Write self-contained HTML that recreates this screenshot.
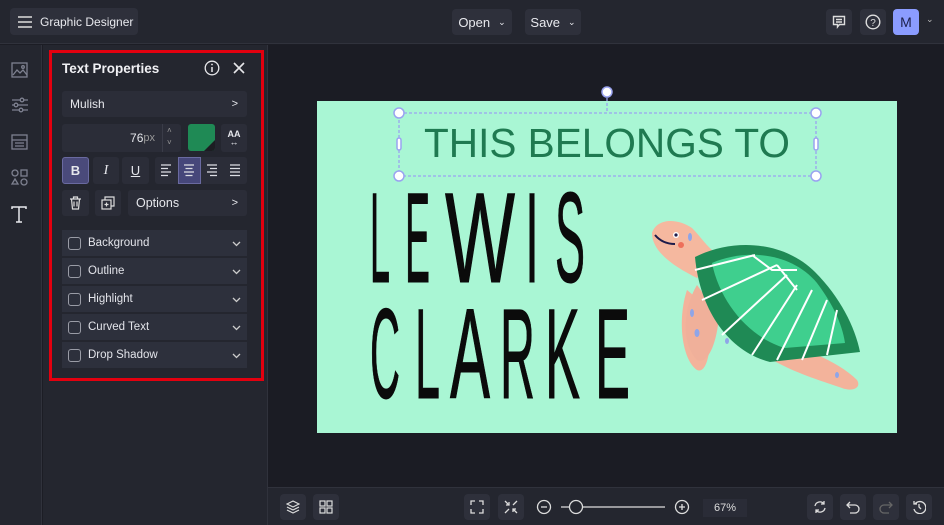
<!DOCTYPE html>
<html><head><meta charset="utf-8"><style>
*{box-sizing:border-box;margin:0;padding:0}
body{width:944px;height:525px;overflow:hidden;background:#1c1d25;font-family:"Liberation Sans",sans-serif;color:#e6e7ec;position:relative}
.abs{position:absolute}
.top{left:0;top:0;width:944px;height:44px;background:#24262f;border-bottom:1px solid #30323c}
.btn{position:absolute;background:#2e303b;border-radius:4px;font-size:13px;color:#e8e9ee;display:flex;align-items:center;justify-content:center;white-space:nowrap}
.rail{left:0;top:45px;width:42px;height:480px;background:#24262f;border-right:1px solid #30323c}
.panel{left:43px;top:45px;width:225px;height:480px;background:#24262f;border-right:1px solid #30323c}
.red{left:49px;top:50px;width:215px;height:331px;border:3px solid #e3000f}
.ctl{position:absolute;background:#2b2d38;border-radius:3px;font-size:12px;color:#e6e7ec;display:flex;align-items:center}
.acc{position:absolute;left:62px;width:185px;height:26px;background:#2d303c;font-size:11.5px;display:flex;align-items:center;color:#e3e4ea}
.acc .cb{width:13px;height:13px;border:1.5px solid #9a9ca6;border-radius:3px;margin:0 7px 0 6px}
.acc .ch{position:absolute;right:6px;top:9px}
.bottom{left:268px;top:487px;width:676px;height:38px;background:#24262f;border-top:1px solid #30323c}
.ib{position:absolute;width:26px;height:26px;background:#2e303b;border-radius:4px;display:flex;align-items:center;justify-content:center}
</style></head><body>
<div class="abs top"></div>
<div class="btn" style="left:10px;top:8px;width:128px;height:27px;justify-content:flex-start;padding-left:8px">
<svg width="14" height="12" viewBox="0 0 14 12"><path d="M0 1h14M0 6h14M0 11h14" stroke="#ddd" stroke-width="1.5"/></svg>
<span style="margin-left:8px;font-size:12px">Graphic Designer</span></div>
<div class="btn" style="left:452px;top:9px;width:60px;height:26px">Open <span style="font-size:9px;margin-left:8px">&#8964;</span></div>
<div class="btn" style="left:525px;top:9px;width:56px;height:26px">Save <span style="font-size:9px;margin-left:8px">&#8964;</span></div>
<div class="btn" style="left:826px;top:9px;width:26px;height:26px"><svg width="14" height="14" viewBox="0 0 14 14"><path d="M1.5 1.5h11v8h-5l-2 2.5v-2.5h-4z M4 4.5h6M4 7h6" fill="none" stroke="#ddd" stroke-width="1.4"/></svg></div>
<div class="btn" style="left:860px;top:9px;width:26px;height:26px"><svg width="16" height="16" viewBox="0 0 16 16"><circle cx="8" cy="8" r="6.8" fill="none" stroke="#ddd" stroke-width="1.4"/><text x="8" y="12" font-size="10" text-anchor="middle" fill="#ddd" font-family="Liberation Sans">?</text></svg></div>
<div class="btn" style="left:893px;top:9px;width:26px;height:26px;background:#8b9cff;color:#1c1f4a;font-size:14px">M</div>
<div class="abs" style="left:926px;top:14px;font-size:9px;color:#bbb">&#8964;</div>

<div class="abs rail"></div>
<svg class="abs" style="left:10px;top:61px" width="20" height="170" viewBox="0 0 20 170" fill="none" stroke="#7e8190" stroke-width="1.3">
<rect x="2" y="2" width="15" height="14"/><path d="M3 14l4-5 3 3 3-3 4 5"/><circle cx="13" cy="6" r="1.3"/>
<path d="M2 39h16M2 44h16M2 49h16"/><circle cx="12" cy="39" r="1.8" fill="#24262f"/><circle cx="6" cy="44" r="1.8" fill="#24262f"/><circle cx="11" cy="49" r="1.8" fill="#24262f"/>
<rect x="2" y="74" width="15" height="14"/><path d="M2 79h15M5 82h9M5 85h9"/>
<circle cx="5" cy="112" r="3"/><rect x="11" y="109" width="6" height="6"/><path d="M5 118l3 5h-6z"/><circle cx="14" cy="121" r="3"/>
<path d="M2 148v-2h14v2M9 146v15M6 161h6" stroke="#e8e9ee" stroke-width="1.5"/>
</svg>

<div class="abs panel"></div>
<div class="abs red"></div>
<div class="abs" style="left:62px;top:61px;font-size:13.5px;font-weight:bold;color:#f0f0f4">Text Properties</div>
<svg class="abs" style="left:204px;top:60px" width="44" height="16" viewBox="0 0 44 16"><circle cx="8" cy="8" r="6.8" fill="none" stroke="#e6e6ea" stroke-width="1.3"/><path d="M8 7v5" stroke="#e6e6ea" stroke-width="1.5"/><circle cx="8" cy="4.5" r="0.9" fill="#e6e6ea"/><path d="M30 3l10 10M40 3l-10 10" stroke="#e6e6ea" stroke-width="1.6"/></svg>
<div class="ctl" style="left:62px;top:91px;width:185px;height:26px;padding-left:8px">Mulish<span style="position:absolute;right:9px;font-size:11px">&gt;</span></div>
<div class="ctl" style="left:62px;top:124px;width:119px;height:28px;justify-content:flex-end;padding-right:26px">76<span style="color:#999;font-size:11px">px</span></div>
<div class="abs" style="left:162px;top:124px;width:1px;height:28px;background:#3a3c48"></div>
<div class="abs" style="left:167px;top:125px;font-size:8px;color:#999;line-height:12px">&#708;<br>&#709;</div>
<div class="abs" style="left:188px;top:124px;width:27px;height:27px;background:#1f8a55;border-radius:3px;overflow:hidden"><div style="position:absolute;right:0;bottom:0;border-left:11px solid transparent;border-bottom:11px solid #1c1d22"></div></div>
<div class="ctl" style="left:221px;top:124px;width:26px;height:28px;justify-content:center;font-size:9px;font-weight:bold;line-height:8px;text-align:center;flex-direction:column">AA<span style="font-size:9px">&#8596;</span></div>
<div class="ctl" style="left:62px;top:157px;width:27px;height:27px;justify-content:center;background:#4a4a7a;border:1px solid #6a6aa0;font-weight:bold;font-size:13px">B</div>
<div class="ctl" style="left:93px;top:157px;width:26px;height:27px;justify-content:center;font-style:italic;font-size:14px;font-family:'Liberation Serif',serif">I</div>
<div class="ctl" style="left:122px;top:157px;width:27px;height:27px;justify-content:center;text-decoration:underline;font-size:13px">U</div>
<div class="ctl" style="left:155px;top:157px;width:92px;height:27px"></div>
<div class="abs" style="left:178px;top:157px;width:23px;height:27px;background:#46477a;border:1px solid #6a6aa0"></div>
<svg class="abs" style="left:155px;top:157px" width="92" height="27" viewBox="0 0 92 27" stroke="#dcdde3" stroke-width="1.2">
<path d="M6 8h10M6 11.5h7M6 15h10M6 18.5h7"/><path d="M29 8h10M30.5 11.5h7M29 15h10M30.5 18.5h7"/><path d="M52 8h10M55 11.5h7M52 15h10M55 18.5h7"/><path d="M75 8h10M75 11.5h10M75 15h10M75 18.5h10"/></svg>
<div class="ctl" style="left:62px;top:190px;width:27px;height:26px;justify-content:center"><svg width="13" height="14" viewBox="0 0 13 14" fill="none" stroke="#ddd" stroke-width="1.2"><path d="M1 3h11M4.5 3V1h4v2M2.5 3l1 10h6l1-10M5 5.5v5M8 5.5v5"/></svg></div>
<div class="ctl" style="left:95px;top:190px;width:26px;height:26px;justify-content:center"><svg width="14" height="14" viewBox="0 0 14 14" fill="none" stroke="#ddd" stroke-width="1.2"><rect x="1" y="4" width="9" height="9"/><path d="M4 4V1h9v9h-3M5.5 6.5v4M3.5 8.5h4"/></svg></div>
<div class="ctl" style="left:128px;top:190px;width:119px;height:26px;padding-left:8px;font-size:12.5px">Options<span style="position:absolute;right:9px;font-size:11px">&gt;</span></div>
<div class="acc" style="top:230px"><div class="cb"></div>Background<svg class="ch" width="9" height="9" viewBox="0 0 9 9"><path d="M1 3l3.5 3.5L8 3" fill="none" stroke="#ccc" stroke-width="1.3"/></svg></div>
<div class="acc" style="top:258px"><div class="cb"></div>Outline<svg class="ch" width="9" height="9" viewBox="0 0 9 9"><path d="M1 3l3.5 3.5L8 3" fill="none" stroke="#ccc" stroke-width="1.3"/></svg></div>
<div class="acc" style="top:286px"><div class="cb"></div>Highlight<svg class="ch" width="9" height="9" viewBox="0 0 9 9"><path d="M1 3l3.5 3.5L8 3" fill="none" stroke="#ccc" stroke-width="1.3"/></svg></div>
<div class="acc" style="top:314px"><div class="cb"></div>Curved Text<svg class="ch" width="9" height="9" viewBox="0 0 9 9"><path d="M1 3l3.5 3.5L8 3" fill="none" stroke="#ccc" stroke-width="1.3"/></svg></div>
<div class="acc" style="top:342px"><div class="cb"></div>Drop Shadow<svg class="ch" width="9" height="9" viewBox="0 0 9 9"><path d="M1 3l3.5 3.5L8 3" fill="none" stroke="#ccc" stroke-width="1.3"/></svg></div>

<!-- canvas -->
<div class="abs" style="left:268px;top:45px;width:676px;height:442px;background:#1b1c24"></div>
<svg class="abs" style="left:317px;top:85px" width="580" height="348" viewBox="0 0 580 348">
<rect x="0" y="16" width="580" height="332" fill="#a9f6d4"/>
<text x="290" y="72" font-family="Liberation Sans" font-size="41" fill="#1f7a51" text-anchor="middle" textLength="366" lengthAdjust="spacingAndGlyphs">THIS BELONGS TO</text>
<g font-family="Liberation Sans" font-size="128" fill="#0b0b0b" stroke="#0b0b0b" stroke-width="1" lengthAdjust="spacingAndGlyphs">
<text x="53" y="197" textLength="20" lengthAdjust="spacingAndGlyphs">L</text>
<text x="88" y="197" textLength="25" lengthAdjust="spacingAndGlyphs">E</text>
<text x="128" y="197" textLength="70" lengthAdjust="spacingAndGlyphs">W</text>
<text x="208" y="197" textLength="14" lengthAdjust="spacingAndGlyphs">I</text>
<text x="238" y="197" textLength="30" lengthAdjust="spacingAndGlyphs">S</text>
<text x="53" y="313" textLength="30" lengthAdjust="spacingAndGlyphs">C</text>
<text x="98" y="313" textLength="25" lengthAdjust="spacingAndGlyphs">L</text>
<text x="133" y="313" textLength="40" lengthAdjust="spacingAndGlyphs">A</text>
<text x="183" y="313" textLength="35" lengthAdjust="spacingAndGlyphs">R</text>
<text x="228" y="313" textLength="35" lengthAdjust="spacingAndGlyphs">K</text>
<text x="278" y="313" textLength="35" lengthAdjust="spacingAndGlyphs">E</text>
</g>
<rect x="82" y="28" width="417" height="63" fill="none" stroke="#9aa3f0" stroke-width="1.3" stroke-dasharray="3 2"/>
<path d="M290 8v20" stroke="#9aa3f0" stroke-width="1.3" stroke-dasharray="3 2"/>
<g fill="#fff" stroke="#9aa3f0" stroke-width="1.5"><circle cx="290" cy="7" r="5"/><circle cx="82" cy="28" r="5"/><circle cx="499" cy="28" r="5"/><circle cx="82" cy="91" r="5"/><circle cx="499" cy="91" r="5"/><rect x="80" y="53" width="4" height="12" rx="2"/><rect x="497" y="53" width="4" height="12" rx="2"/></g>
<!-- turtle -->
<g>
<path d="M370 205c-10 30-5 70 10 80 12 5 15-30 14-60z" fill="#f3b39b"/>
<path d="M380 200c-15 25-15 60 0 75 10 5 20-15 22-45z" fill="#f0b09a"/>
<path d="M450 255c30 5 70 20 90 40 5 8-5 12-15 8-30-10-60-20-80-35z" fill="#f3b39b"/>
<path d="M335 148c5-15 25-15 40-5 10 10 15 20 30 30l-25 20c-20-10-45-25-45-45z" fill="#f5b89f"/>
<path d="M378 172c40-20 90-15 120 15 25 25 40 55 45 80l-90 10c-40-10-70-50-75-105z" fill="#1f8a55"/>
<path d="M395 178c35-15 80-10 105 20 15 20 25 40 28 60l-60 5c-35-10-65-45-73-85z" fill="#3fcf8e"/>
<g stroke="#fff" stroke-width="2" fill="none"><path d="M378 185l60-15M385 215l75-35M405 250l65-60M435 270l45-70M460 275l35-70M485 275l25-60M510 270l10-45"/><path d="M435 170l20 15 25 0M460 180l20 25"/></g>
<circle cx="359" cy="150" r="3" fill="#fff"/><circle cx="359" cy="150" r="1.6" fill="#1d1b4a"/>
<path d="M338 150c5 6 12 9 20 9" stroke="#1d1b4a" stroke-width="2" fill="none"/>
<circle cx="364" cy="160" r="3" fill="#ee6f5a"/>
<g fill="#8fa5e8"><ellipse cx="373" cy="152" rx="2" ry="4"/><ellipse cx="375" cy="228" rx="2" ry="4"/><ellipse cx="380" cy="248" rx="2.5" ry="4"/><ellipse cx="520" cy="290" rx="2" ry="3"/><ellipse cx="410" cy="256" rx="2" ry="3"/></g>
</g>
</svg>

<div class="abs bottom"></div>
<div class="ib" style="left:280px;top:494px"><svg width="14" height="14" viewBox="0 0 14 14" fill="none" stroke="#ddd" stroke-width="1.2"><path d="M7 1l6 3-6 3-6-3zM1 7l6 3 6-3M1 10l6 3 6-3"/></svg></div>
<div class="ib" style="left:313px;top:494px"><svg width="14" height="14" viewBox="0 0 14 14" fill="none" stroke="#ddd" stroke-width="1.2"><rect x="1" y="1" width="5" height="5"/><rect x="8" y="1" width="5" height="5"/><rect x="1" y="8" width="5" height="5"/><rect x="8" y="8" width="5" height="5"/></svg></div>
<div class="ib" style="left:464px;top:494px"><svg width="14" height="14" viewBox="0 0 14 14" fill="none" stroke="#ddd" stroke-width="1.3"><path d="M1 5V1h4M9 1h4v4M13 9v4H9M5 13H1V9"/></svg></div>
<div class="ib" style="left:498px;top:494px"><svg width="14" height="14" viewBox="0 0 14 14" fill="none" stroke="#ddd" stroke-width="1.3"><path d="M1 1l4 4M2 5h3V2M13 13l-4-4M12 9H9v3M13 1l-4 4M1 13l4-4"/></svg></div>
<svg class="abs" style="left:535px;top:498px" width="160" height="18" viewBox="0 0 160 18" fill="none" stroke="#ddd" stroke-width="1.3"><circle cx="9" cy="9" r="6.5"/><path d="M6 9h6"/><path d="M26 9h8M48 9h82" /><circle cx="41" cy="9" r="6.5"/><circle cx="147" cy="9" r="6.5"/><path d="M144 9h6M147 6v6"/></svg>
<div class="abs" style="left:703px;top:499px;width:44px;height:18px;background:#2a2c37;font-size:11px;color:#ddd;text-align:center;line-height:18px">67%</div>
<div class="ib" style="left:807px;top:494px"><svg width="14" height="14" viewBox="0 0 14 14" fill="none" stroke="#ddd" stroke-width="1.3"><path d="M2 6a5 5 0 0 1 9-2M12 8a5 5 0 0 1-9 2M11 1v3H8M3 13v-3h3"/></svg></div>
<div class="ib" style="left:840px;top:494px"><svg width="14" height="14" viewBox="0 0 14 14" fill="none" stroke="#ddd" stroke-width="1.3"><path d="M4 2L1 5l3 3M1 5h8a4 4 0 0 1 0 8H4"/></svg></div>
<div class="ib" style="left:873px;top:494px"><svg width="14" height="14" viewBox="0 0 14 14" fill="none" stroke="#666" stroke-width="1.3"><path d="M10 2l3 3-3 3M13 5H5a4 4 0 0 0 0 8h5"/></svg></div>
<div class="ib" style="left:906px;top:494px"><svg width="14" height="14" viewBox="0 0 14 14" fill="none" stroke="#ddd" stroke-width="1.3"><path d="M3 4a6 6 0 1 1-1 5M2 1v3h3M7 4v3l2 2"/></svg></div>
</body></html>
